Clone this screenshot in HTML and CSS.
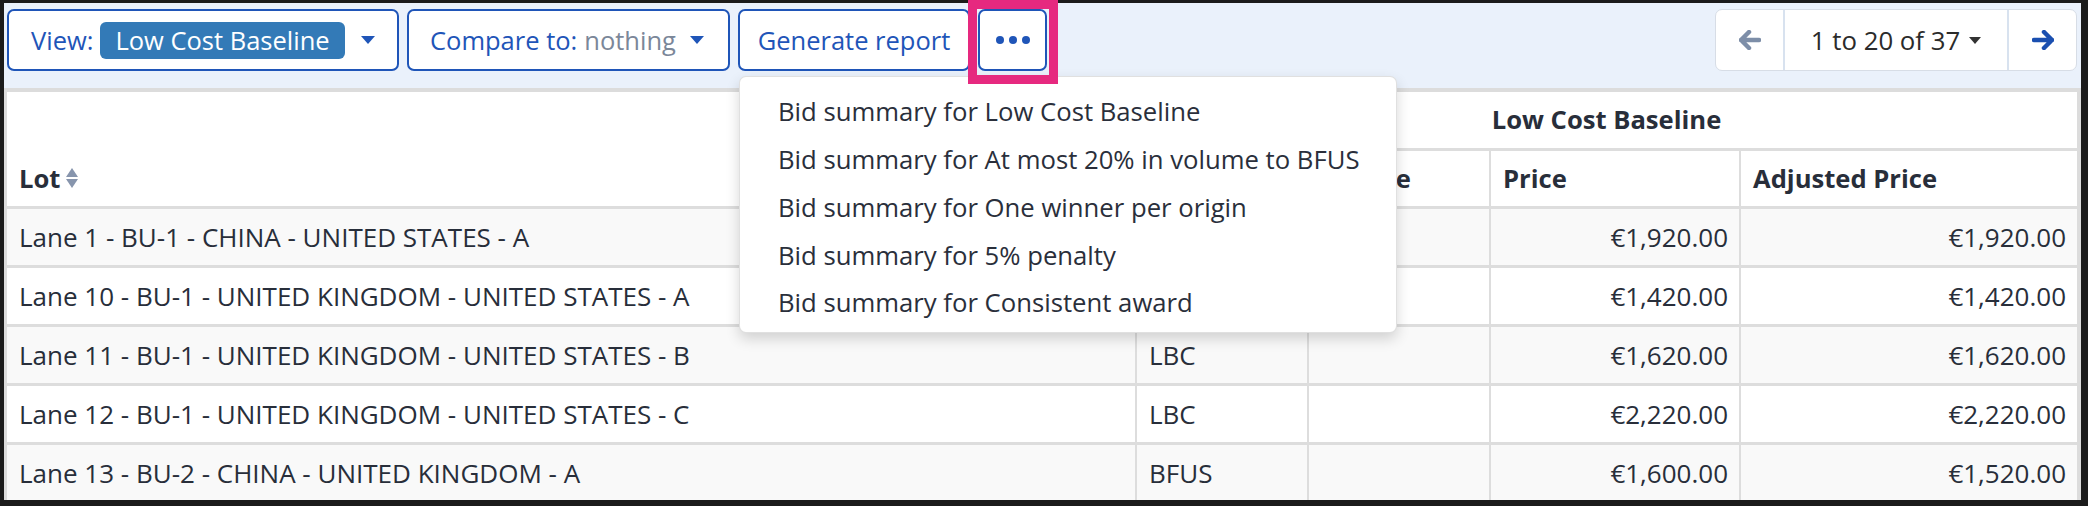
FILE: index.html
```html
<!DOCTYPE html>
<html>
<head>
<meta charset="utf-8">
<link rel="stylesheet" href="styles.css">
</head>
<body>
<div class="frame">
  <div class="viewport">
    <div class="toolbar">
      <div class="actions">
        <button class="btn btn-view"><span class="lbl">View:</span><span class="badge">Low Cost Baseline</span><span class="caret"></span></button>
        <button class="btn btn-compare"><span class="lbl">Compare to:</span><span class="muted">nothing</span><span class="caret"></span></button>
        <button class="btn btn-report">Generate report</button>
        <button class="btn btn-more"><span class="dot"></span><span class="dot"></span><span class="dot"></span></button>
      </div>
      <div class="pager">
        <span class="pg-arrow pg-prev"><svg width="22" height="20" viewBox="0 0 22 20"><path d="M10 2 L2 10 L10 18 M2 10 H20" fill="none" stroke="currentColor" stroke-width="4.5" stroke-linejoin="round" stroke-linecap="round"/></svg></span>
        <span class="pg-range">1 to 20 of 37<span class="caret dark"></span></span>
        <span class="pg-arrow pg-next"><svg width="22" height="20" viewBox="0 0 22 20"><path d="M12 2 L20 10 L12 18 M20 10 H2" fill="none" stroke="currentColor" stroke-width="4.5" stroke-linejoin="round" stroke-linecap="round"/></svg></span>
      </div>
    </div>

    <div class="card">
      <table class="grid">
        <colgroup>
          <col class="c-lot"><col class="c-sup"><col class="c-vol"><col class="c-price"><col class="c-adj">
        </colgroup>
        <thead>
          <tr class="group-row">
            <th rowspan="2" class="th-lot">Lot<span class="sort"><span class="up"></span><span class="down"></span></span></th>
            <th colspan="4" class="th-group">Low Cost Baseline</th>
          </tr>
          <tr class="head-row">
            <th class="bl">Supplier</th>
            <th class="bl">Rebate</th>
            <th class="bl">Price</th>
            <th class="bl">Adjusted Price</th>
          </tr>
        </thead>
        <tbody>
          <tr class="odd"><td>Lane 1 - BU-1 - CHINA - UNITED STATES - A</td><td class="bl">LBC</td><td class="bl"></td><td class="bl num">€1,920.00</td><td class="bl num">€1,920.00</td></tr>
          <tr><td>Lane 10 - BU-1 - UNITED KINGDOM - UNITED STATES - A</td><td class="bl">LBC</td><td class="bl"></td><td class="bl num">€1,420.00</td><td class="bl num">€1,420.00</td></tr>
          <tr class="odd"><td>Lane 11 - BU-1 - UNITED KINGDOM - UNITED STATES - B</td><td class="bl">LBC</td><td class="bl"></td><td class="bl num">€1,620.00</td><td class="bl num">€1,620.00</td></tr>
          <tr><td>Lane 12 - BU-1 - UNITED KINGDOM - UNITED STATES - C</td><td class="bl">LBC</td><td class="bl"></td><td class="bl num">€2,220.00</td><td class="bl num">€2,220.00</td></tr>
          <tr class="odd"><td>Lane 13 - BU-2 - CHINA - UNITED KINGDOM - A</td><td class="bl">BFUS</td><td class="bl"></td><td class="bl num">€1,600.00</td><td class="bl num">€1,520.00</td></tr>
        </tbody>
      </table>
    </div>
  </div>

  <ul class="menu">
    <li>Bid summary for Low Cost Baseline</li>
    <li>Bid summary for At most 20% in volume to BFUS</li>
    <li>Bid summary for One winner per origin</li>
    <li>Bid summary for 5% penalty</li>
    <li>Bid summary for Consistent award</li>
  </ul>
  <div class="highlight"></div>
</div>
</body>
</html>
```

FILE: styles.css
```css
* { box-sizing: border-box; }
html, body { margin: 0; padding: 0; }
body {
  font-family: "Open Sans", "Noto Sans", sans-serif;
  font-size: 25.5px;
  color: #282e3a;
  background: #1b1b1b;
}
.frame {
  position: relative;
  width: 2088px;
  height: 506px;
  border-style: solid;
  border-color: #1b1b1b;
  border-width: 3px 7px 6px 4px;
  background: #eaf1fb;
}
.viewport {
  height: 100%;
  overflow: hidden;
}
.toolbar {
  display: flex;
  justify-content: space-between;
  align-items: center;
  padding: 6px 4px 0 3px;
}
.actions { display: flex; gap: 8px; }
.btn {
  display: flex;
  align-items: center;
  height: 62px;
  padding: 0 20px;
  border: 2px solid #1f55b8;
  border-radius: 7px;
  background: #fff;
  color: #1f55b8;
  font-family: inherit;
  font-size: 25.5px;
}
.btn-view { width: 392px; padding-left: 22px; }
.btn-view .lbl { margin-right: 7px; }
.badge {
  background: #337ab7;
  color: #fff;
  border-radius: 6px;
  padding: 0 15px;
  height: 37px;
  line-height: 37px;
}
.caret {
  display: inline-block;
  width: 0; height: 0;
  border-left: 7px solid transparent;
  border-right: 7px solid transparent;
  border-top: 8px solid #1f55b8;
  margin-left: 16px;
}
.caret.dark { border-top-color: #333; margin-left: 9px; border-left-width: 6px; border-right-width: 6px; border-top-width: 7px; }
.btn-compare { width: 323px; padding-left: 21px; }
.btn-compare .lbl { margin-right: 7px; }
.btn-compare .caret { margin-left: 14px; }
.muted { color: #7b8799; }
.btn-report { width: 232px; justify-content: center; padding: 0; }
.btn-more { padding: 0; width: 69px; justify-content: center; gap: 5px; }
.dot { width: 8px; height: 8px; border-radius: 50%; background: #1f55b8; }

.pager {
  display: flex;
  height: 62px;
  background: #fff;
  border: 1px solid #d7dde6;
  border-radius: 7px;
  font-size: 25.8px;
}
.pg-arrow { width: 69px; display: flex; align-items: center; justify-content: center; }
.pg-prev { color: #7d8ea8; border-right: 2px solid #d8e2ef; }
.pg-next { color: #1a4fb0; border-left: 2px solid #d8e2ef; }
.pg-range { width: 222px; display: flex; align-items: center; justify-content: center; color: #2b2b2b; }

.card {
  margin-top: 17px;
  background: #fff;
  border: 3px solid #dcdcdc;
  border-top-width: 4px;
  border-right-width: 4px;
  border-bottom: 0;
}
.grid {
  width: 100%;
  border-collapse: separate;
  border-spacing: 0;
  table-layout: fixed;
}
.c-lot { width: 1128px; }
.c-sup { width: 172px; }
.c-vol { width: 182px; }
.c-price { width: 250px; }
.c-adj { width: auto; }
th, td {
  padding: 0 11px 0 12px;
  text-align: left;
  white-space: nowrap;
  overflow: hidden;
}
th { font-weight: 700; font-size: 25.6px; line-height: 56px; }
td { font-size: 26px; line-height: 56px; border-top: 3px solid #dddddd; }
.head-row th { border-top: 3px solid #dddddd; line-height: 55px; }
.bl { border-left: 2px solid #dddddd; }
.th-lot { vertical-align: bottom; line-height: 55px; }
.th-group { text-align: center; }
.num { text-align: right; }
tr.odd td { background: #f9f9f9; }
.sort {
  display: inline-block;
  width: 12px;
  height: 21px;
  margin-left: 6px;
  vertical-align: -1px;
}
.sort .up { display: block; width: 0; height: 0; border-left: 6px solid transparent; border-right: 6px solid transparent; border-bottom: 9px solid #8795ad; margin-bottom: 2px; }
.sort .down { display: block; width: 0; height: 0; border-left: 6px solid transparent; border-right: 6px solid transparent; border-top: 9px solid #8795ad; }

.menu {
  position: absolute;
  left: 735px;
  top: 73px;
  width: 658px;
  height: 257px;
  margin: 0;
  padding: 11px 0 8px;
  list-style: none;
  background: #fff;
  border: 1px solid rgba(0,0,0,.12);
  border-radius: 7px;
  box-shadow: 0 6px 14px rgba(0,0,0,.16);
  font-size: 25.7px;
}
.menu li {
  height: 47.75px;
  display: flex;
  align-items: center;
  padding-left: 38px;
  color: #2a2f3b;
  white-space: nowrap;
}
.highlight {
  position: absolute;
  left: 964px;
  top: -3px;
  width: 90px;
  height: 84px;
  border: 9px solid #e6297f;
}
```
